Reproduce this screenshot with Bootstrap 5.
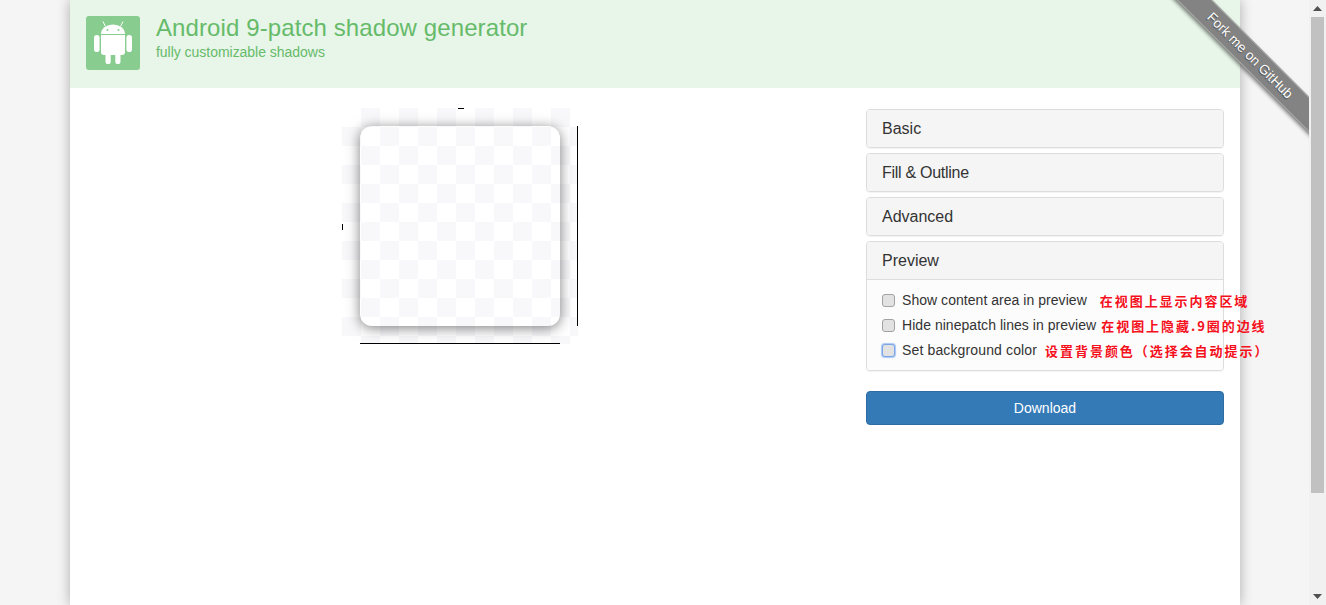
<!DOCTYPE html>
<html lang="en">
<head>
<meta charset="utf-8">
<title>Android 9-patch shadow generator</title>
<link rel="stylesheet" href="https://cdn.jsdelivr.net/npm/bootstrap@5.3.0/dist/css/bootstrap.min.css">
<style>
html,body{height:100%;overflow:hidden}
body{background:#f5f5f5;font-family:"Liberation Sans",Arial,sans-serif;font-size:14px;color:#333;line-height:20px}
.page-area{width:1309px;height:605px;overflow:hidden;position:relative}
.sheet{width:1170px;height:605px;margin-left:70px;background:#fff;box-shadow:0 0 12px rgba(0,0,0,.3)}
.head-band{height:88px;background:#e8f5e9;padding:16px;color:#66bb6a}
.logo-box{width:54px;height:54px;background:#88cd8f;border-radius:3px;flex:none}
.head-title{font-size:24px;line-height:26px;font-weight:400;margin:-1px 0 0;color:#66bb6a;letter-spacing:.1px}
.head-sub{font-size:14px;line-height:20px;margin:1px 0 0;letter-spacing:-.03px}
.preview-col{padding-top:20px}
.patch-canvas{width:236px;height:236px;position:relative;background:repeating-conic-gradient(#f8f8fa 0 25%,#fff 0 50%) 0 0/38px 38px}
.shadow-shape{width:200px;height:200px;border-radius:12px;box-shadow:0 2px 13px rgba(0,0,0,.5)}
.patch-line{position:absolute;background:#000}
.line-top{left:116px;top:0;width:6px;height:1px}
.line-left{left:0;top:116px;width:1px;height:6px}
.line-right{left:235px;top:18px;width:1px;height:200px}
.line-bottom{left:18px;top:235px;width:200px;height:1px}
.side-col{padding:21px 16px 0}
.side-panel{border:1px solid #ddd;border-radius:4px;background:#fff;margin-bottom:5px;box-shadow:0 1px 1px rgba(0,0,0,.05)}
.side-panel .card-header{height:37px;padding:0 15px;background:#f5f5f5;border:0;font-size:16px;line-height:37px;color:#333;border-radius:3px}
.side-panel .tight-words{letter-spacing:-.28px}
.side-panel.is-open .card-header{height:38px;border-bottom:1px solid #ddd;border-radius:3px 3px 0 0}
.side-panel .card-body{padding:10px 15px;background:#fcfcfc;border-radius:0 0 3px 3px;color:#333}
.opt-row{height:20px;margin-bottom:5px;white-space:nowrap}
.opt-row:last-child{margin-bottom:0}
.opt-row label{letter-spacing:.04px}
.opt-row label.wide-label{letter-spacing:.14px}
.opt-check{appearance:none;width:13px;height:13px;margin:0 7px 0 0;background:#e2e2e2;border:1px solid #a2a2a2;border-radius:3px;flex:none}
.opt-check.is-focus{border-color:#7aa5e6;box-shadow:0 0 1px 1px #a9c6f5}
.note-zh{font-family:"Noto Sans CJK SC",sans-serif;font-weight:700;font-size:13px;letter-spacing:1.95px;color:#f5101c;line-height:20px;position:relative;top:1px}
.note-a{margin-left:13px}.note-b{margin-left:5px}.note-c{margin-left:8px}
.dl-btn{height:34px;margin-top:20px;padding:0;font-size:14px;line-height:32px;background:#337ab7;border-color:#2e6da4;border-radius:4px;color:#fff}
.ribbon-clip{position:absolute;top:0;left:1109px;width:200px;height:200px;overflow:hidden}
.ribbon-band{position:absolute;left:-9px;top:43px;width:300px;height:25px;transform:rotate(45deg);background:#838383;box-shadow:0 2px 4px rgba(0,0,0,.5);color:#fff;text-align:center;font-size:13.6px;line-height:23px;text-shadow:0 1px 1px rgba(0,0,0,.5);border-top:1px solid #aaa;border-bottom:1px solid #aaa}
.scroll-track{width:17px;height:605px;background:#f1f1f1;flex:none}
.scroll-thumb{width:13px;height:476px;margin:0 0 0 2px;background:#c1c1c1}
.scroll-btn{height:17px}
.scroll-gap{height:95px}
</style>
</head>
<body>
<div class="d-flex">
  <div class="page-area">
    <div class="sheet">
      <header class="head-band d-flex gap-3">
        <div class="logo-box">
          <svg width="54" height="54" viewBox="0 0 54 54" fill="#fff">
            <path d="M15 18a12 9.5 0 0 1 24 0z"/>
            <path d="M15 19h24v17a3 3 0 0 1-3 3H18a3 3 0 0 1-3-3z"/>
            <rect x="19.5" y="36" width="5.2" height="12" rx="2.6"/>
            <rect x="29.3" y="36" width="5.2" height="12" rx="2.6"/>
            <rect x="8" y="19" width="5.6" height="17" rx="2.8"/>
            <rect x="40.4" y="19" width="5.6" height="17" rx="2.8"/>
            <path d="M19.5 10.5 17 5.5M34.5 10.5 37 5.5" stroke="#fff" stroke-width="1"/>
            <circle cx="21.5" cy="14" r="1" fill="#88cd8f"/>
            <circle cx="32.5" cy="14" r="1" fill="#88cd8f"/>
          </svg>
        </div>
        <div>
          <h1 class="head-title">Android 9-patch shadow generator</h1>
          <p class="head-sub">fully customizable shadows</p>
        </div>
      </header>
      <div class="row g-0">
        <div class="col-8 preview-col d-flex justify-content-center">
          <div class="patch-canvas d-flex align-items-center justify-content-center">
            <div class="shadow-shape"></div>
            <span class="patch-line line-top"></span>
            <span class="patch-line line-left"></span>
            <span class="patch-line line-right"></span>
            <span class="patch-line line-bottom"></span>
          </div>
        </div>
        <div class="col-4 side-col">
          <div class="card side-panel"><div class="card-header">Basic</div></div>
          <div class="card side-panel"><div class="card-header tight-words">Fill &amp; Outline</div></div>
          <div class="card side-panel"><div class="card-header">Advanced</div></div>
          <div class="card side-panel is-open">
            <div class="card-header">Preview</div>
            <div class="card-body">
              <div class="opt-row d-flex align-items-center"><input class="opt-check" type="checkbox" id="o1"><label for="o1">Show content area in preview</label><span class="note-zh note-a">在视图上显示内容区域</span></div>
              <div class="opt-row d-flex align-items-center"><input class="opt-check" type="checkbox" id="o2"><label for="o2">Hide ninepatch lines in preview</label><span class="note-zh note-b">在视图上隐藏.9圈的边线</span></div>
              <div class="opt-row d-flex align-items-center"><input class="opt-check is-focus" type="checkbox" id="o3"><label class="wide-label" for="o3">Set background color</label><span class="note-zh note-c">设置背景颜色（选择会自动提示）</span></div>
            </div>
          </div>
          <button type="button" class="btn btn-primary w-100 d-block dl-btn">Download</button>
        </div>
      </div>
    </div>
    <div class="ribbon-clip"><div class="ribbon-band">Fork me on GitHub</div></div>
  </div>
  <div class="scroll-track">
    <div class="scroll-btn d-flex align-items-center justify-content-center"><svg width="9" height="5" viewBox="0 0 9 5"><path d="M4.5 0 9 5H0z" fill="#505050"/></svg></div>
    <div class="scroll-thumb"></div>
    <div class="scroll-gap"></div>
    <div class="scroll-btn d-flex align-items-center justify-content-center"><svg width="9" height="5" viewBox="0 0 9 5"><path d="M0 0h9L4.5 5z" fill="#505050"/></svg></div>
  </div>
</div>
</body>
</html>
